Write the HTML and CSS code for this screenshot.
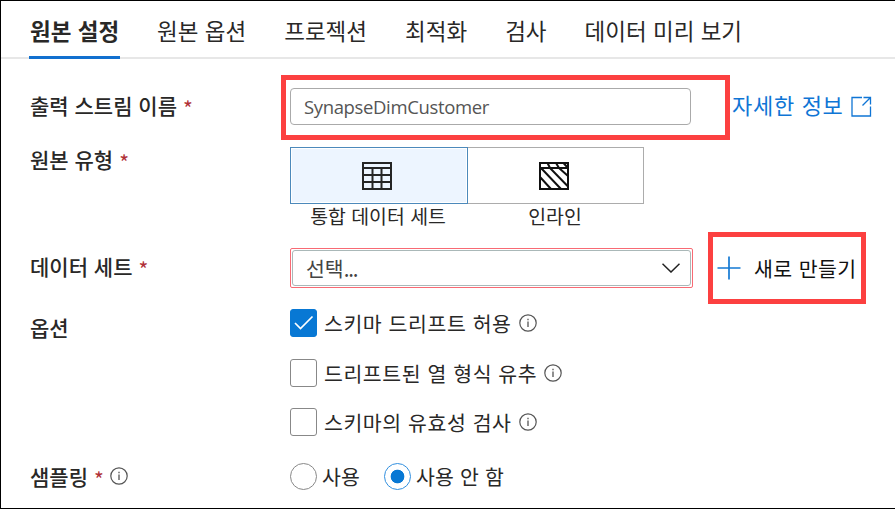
FILE: index.html
```html
<!DOCTYPE html>
<html lang="ko">
<head>
<meta charset="utf-8">
<title>원본 설정</title>
<link rel="stylesheet" href="styles.css">
</head>
<body>
<svg width="0" height="0" class="defs">
  <symbol id="info" viewBox="0 0 18 18"><circle cx="9" cy="9" r="8.2" fill="none" stroke="currentColor" stroke-width="1.2"/><path d="M9 7.5v5.5M9 4.8v1.4" stroke="currentColor" stroke-width="1.3"/></symbol>
</svg>
<main class="panel">
  <nav class="tabs">
    <a class="tab active">원본 설정</a>
    <a class="tab">원본 옵션</a>
    <a class="tab">프로젝션</a>
    <a class="tab">최적화</a>
    <a class="tab">검사</a>
    <a class="tab">데이터 미리 보기</a>
  </nav>
  <form class="form">
    <div class="row row-name">
      <div class="label">출력 스트림 이름<span class="req">*</span></div>
      <div class="input">SynapseDimCustomer</div>
      <a class="more"><span>자세한 정보</span>
        <svg width="21" height="21" viewBox="0 0 21 21" fill="none" stroke="currentColor" stroke-width="1.3"><path d="M11 1.5H1V20H19.5V10.5M12.5 1.5H19.5V8.5M19.5 1.5L11.5 9.5"/></svg>
      </a>
    </div>
    <div class="row row-type">
      <div class="label">원본 유형<span class="req">*</span></div>
      <div class="choices">
        <div class="choice">
          <div class="tile selected">
            <svg width="30" height="28" viewBox="0 0 30 28" fill="none" stroke="#252525" stroke-width="2"><path d="M1 1H29V27H1ZM1 6H29M1 13H29M1 20H29M10.5 6V27M19.5 6V27"/></svg>
          </div>
          <span class="caption">통합 데이터 세트</span>
        </div>
        <div class="choice">
          <div class="tile">
            <svg width="30" height="28" viewBox="0 0 30 28" fill="none" stroke="#111" stroke-width="2"><path d="M1 1H29V27H1ZM1 6H29M8.5 1L11 6M17 1L20 6M24.5 1L29 6M1 15L12 27M2 6L22 27M11 6L29 24.500M20 6L29 14"/></svg>
          </div>
          <span class="caption">인라인</span>
        </div>
      </div>
    </div>
    <div class="row row-dataset">
      <div class="label">데이터 세트<span class="req">*</span></div>
      <div class="select"><div class="select-inner"><span>선택<span class="dots">...</span></span>
        <svg width="18" height="10" viewBox="0 0 18 10" fill="none" stroke="#222" stroke-width="1.5"><path d="M.5 .7L9 9L17.500 .7"/></svg></div></div>
      <a class="new">
        <svg width="24" height="24" viewBox="0 0 24 24" stroke="#1479d3" stroke-width="1.7"><path d="M12 .5V23.500M.5 12H23.500"/></svg>
        <span>새로 만들기</span>
      </a>
    </div>
    <div class="row row-options">
      <div class="label">옵션</div>
      <div class="options">
        <div class="option"><span class="box checked"><svg width="20" height="16" viewBox="0 0 20 16" fill="none" stroke="#fff" stroke-width="1.7"><path d="M1 8L6.500 13.500L18.500 1.500"/></svg></span><span class="text">스키마 드리프트 허용</span><svg class="info"><use href="#info"/></svg></div>
        <div class="option"><span class="box"></span><span class="text">드리프트된 열 형식 유추</span><svg class="info"><use href="#info"/></svg></div>
        <div class="option"><span class="box"></span><span class="text">스키마의 유효성 검사</span><svg class="info"><use href="#info"/></svg></div>
      </div>
    </div>
    <div class="row row-sampling">
      <div class="label">샘플링<span class="req">*</span><svg class="info"><use href="#info"/></svg></div>
      <div class="option first-radio"><span class="radio"></span><span class="text">사용</span></div>
      <div class="option"><span class="radio on"></span><span class="text">사용 안 함</span></div>
    </div>
  </form>
  <div class="mark mark-name"></div>
  <div class="mark mark-new"></div>
</main>
</body>
</html>
```
FILE: styles.css
```css
* { box-sizing: border-box; }
body {
  margin: 0;
  background: #fff;
  color: #292827;
  font-family: "Noto Sans CJK KR", sans-serif;
  font-size: 20.5px;
  line-height: 28px;
  white-space: nowrap;
}
svg { display: block; flex: none; }
.defs { position: absolute; }
.panel {
  position: relative;
  width: 895px;
  height: 509px;
  border: 1px solid #000;
  border-right: 0;
  overflow: hidden;
}
.tabs {
  display: flex;
  gap: 36px;
  height: 58px;
  padding: 14px 0 0 28px;
  border-bottom: 2px solid #e7e7e7;
  font-size: 22.5px;
  line-height: 30px;
}
.tab { height: 44px; padding: 0 1px; }
.active { font-weight: 700; border-bottom: 3px solid #1170cf; }
.form { padding-left: 29px; }
.row { display: flex; }
.label {
  display: flex;
  align-items: center;
  width: 260px;
  height: 24px;
  flex: none;
  font-size: 21px;
  font-weight: 500;
}
.req { margin: 6px 0 0 6px; color: #b03037; font-size: 21px; font-weight: 400; }
.row-name { align-items: center; height: 37px; margin-top: 29px; }
.row-name .label, .row-dataset .label { margin-bottom: 4px; }
.input {
  width: 401px;
  height: 37px;
  padding-left: 13px;
  border: 1.500px solid #aaa;
  border-radius: 4px;
  color: #555;
  font-family: "Open Sans", sans-serif;
  font-size: 18.5px;
  letter-spacing: -.36px;
  line-height: 35px;
}
.more {
  display: flex;
  align-items: center;
  gap: 7px;
  margin: 0 0 5px 41px;
  color: #0f75d5;
  font-size: 22px;
  letter-spacing: .7px;
}
.more svg { margin-top: 4px; }
.row-type { margin-top: 22px; }
.choices { display: flex; }
.choice:first-child { width: 178px; }
.choice { width: 176px; text-align: center; }
.tile {
  display: flex;
  align-items: center;
  justify-content: center;
  height: 57px;
  padding-right: 4px;
  border: 1.500px solid #acacac;
  border-left: 0;
}
.selected { border: 1px solid #4c89bb; background: #edf5ff; box-shadow: inset 0 0 0 1px #fff; }
.caption { display: block; padding-right: 2px; line-height: 24px; font-size: 19.4px; }
.row-dataset { align-items: center; height: 40px; margin-top: 20px; }
.select {
  width: 403px;
  height: 40px;
  border: 1.500px solid #f86a74;
  padding: 1px;
  border-radius: 2px;
}
.select-inner {
  display: flex;
  align-items: center;
  justify-content: space-between;
  height: 100%;
  padding: 0 10px 1px 13px;
  border: 1px solid #aab8b8;
  border-radius: 3px;
  color: #444;
}
.dots { letter-spacing: -1.2px; }
.new { display: flex; align-items: center; gap: 13px; margin-left: 24px; color: #111; letter-spacing: .4px; }
.row-options { margin-top: 21px; }
.row-options .label { margin-top: 6px; }
.options { display: flex; flex-direction: column; gap: 21.500px; }
.option { display: flex; align-items: center; height: 28px; }
.box {
  display: flex;
  align-items: center;
  justify-content: center;
  width: 27px;
  height: 28px;
  border: 1.500px solid #888;
  border-radius: 3px;
}
.checked { background: #0878d4; border-color: #0878d4; }
.text { margin-left: 7px; }
.options .text { letter-spacing: .57px; }
.info { width: 18px; height: 18px; margin-left: 7px; color: #555; }
.row-sampling { margin-top: 26px; }
.row-sampling .label { height: 27px; }
.row-sampling .info { margin-left: 6px; }
.first-radio { width: 94px; }
.radio {
  width: 27px;
  height: 27px;
  border: 1.500px solid #888;
  border-radius: 50%;
}
.on { border-color: #3290df; background: radial-gradient(circle, #0878d4 6.500px, #fff 7.200px); }
.row-sampling .text { margin-left: 5px; letter-spacing: .2px; }
.mark { position: absolute; border: 5px solid #fc4040; }
.mark-name { left: 280px; top: 74px; width: 449px; height: 65px; }
.mark-new { left: 707px; top: 231px; width: 158px; height: 72px; }
```
